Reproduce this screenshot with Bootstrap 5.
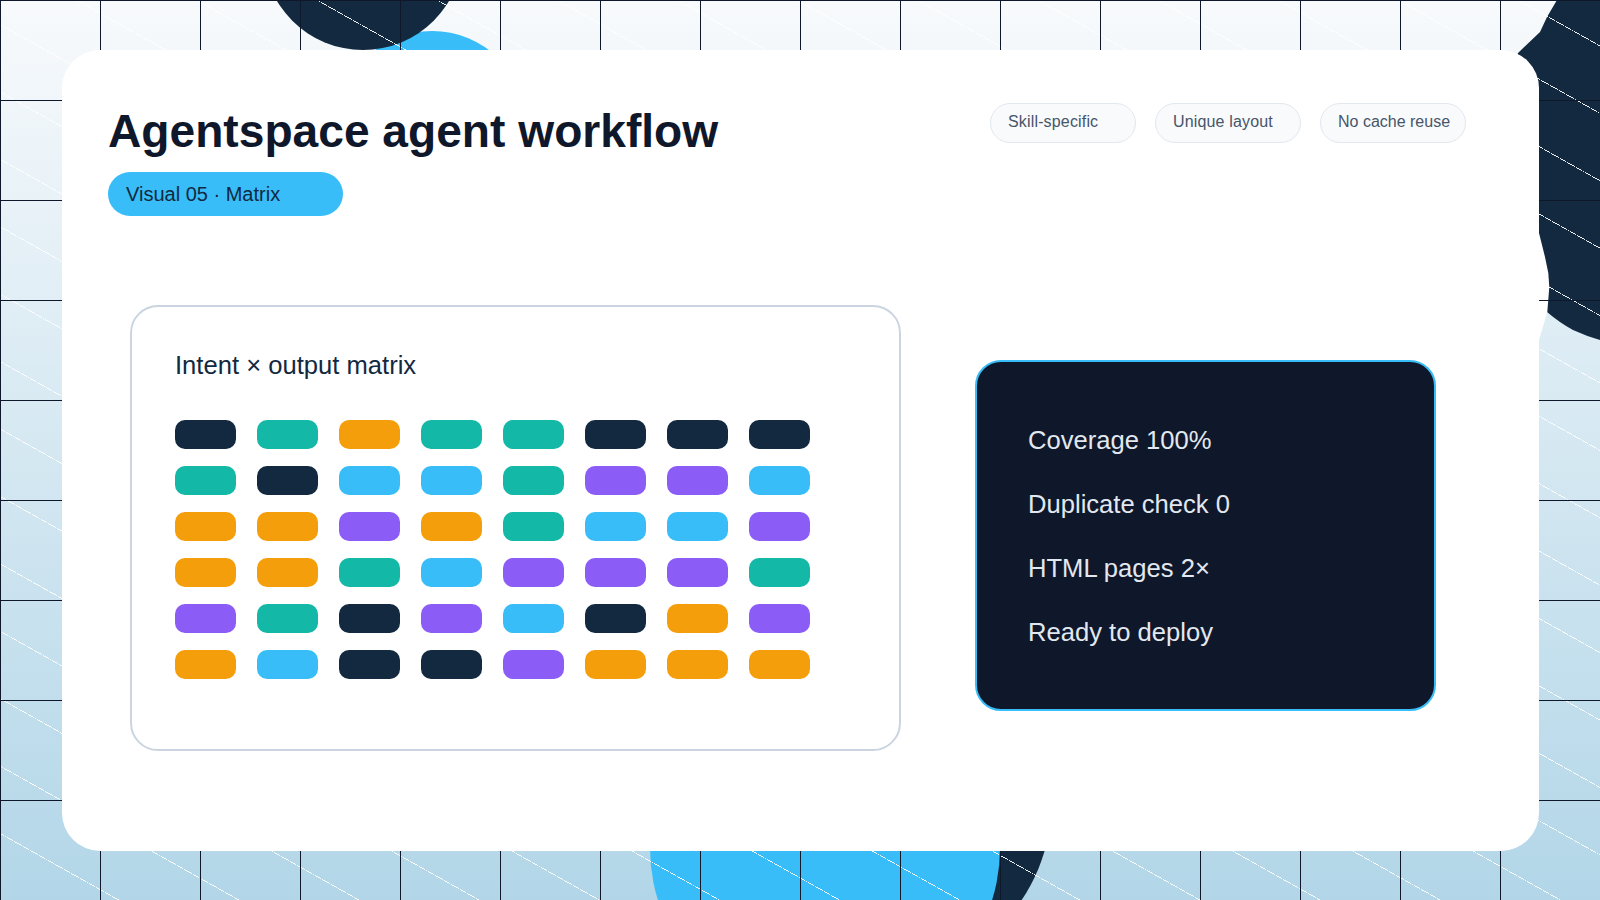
<!DOCTYPE html>
<html lang="en">
<head>
<meta charset="utf-8">
<title>Agentspace agent workflow</title>
<link href="https://cdn.jsdelivr.net/npm/bootstrap@5.3.0/dist/css/bootstrap.min.css" rel="stylesheet">
<style>
html,body{margin:0;height:900px;overflow:hidden}
body{font-family:"Liberation Sans",Arial,sans-serif}
.stage{position:relative;width:1600px;height:900px;overflow:hidden;padding:50px 0 0 62px;background:linear-gradient(180deg,#f8fafc 0%,#b2d6e8 100%)}
.decor{position:absolute;inset:0;width:1600px;height:900px}
.overlay{position:absolute;inset:0;background-image:
 linear-gradient(to right,#0f172a 1px,transparent 1px),
 linear-gradient(to bottom,#0f172a 1px,transparent 1px),
 repeating-linear-gradient(29.3deg,transparent 0,transparent 57.7px,rgba(255,255,255,.92) 57.7px,rgba(255,255,255,.92) 58.45px,transparent 58.45px,transparent 58.79px);
 background-size:100px 100px,100px 100px,auto}
.sheet{position:relative;width:1477px;height:801px;background:#fff;border-radius:38px;padding:54px 73px 0 46px}
.headline{font-size:46.15px;line-height:55px;font-weight:700;color:#0f172a;margin:0 0 13px}
.tagpill{display:block;width:235px;height:44px;line-height:44px;padding-left:18px;font-size:20px;background:#38bdf8;color:#12293f}
.chips{gap:19px;margin-top:-1px}
.chip{width:146px;height:40px;line-height:36px;padding-left:17px;font-size:16px;color:#475569;background:#f8fafc;border:1px solid #e2e8f0}
.chip-wide{letter-spacing:.16px}
.panels{margin:89px 0 0 22px;gap:74px}
.matrixbox{width:771px;height:446px;border:2px solid #cbd5e1;border-radius:28px;padding:40px 43px}
.matrixtitle{font-size:25.6px;line-height:36px;color:#12293f;margin:0 0 37px}
.cells{display:grid;grid-template-columns:repeat(8,61px);grid-auto-rows:29px;column-gap:21px;row-gap:17px}
.cells i{display:block;border-radius:10px}
.n{background:#12293f}.t{background:#14b8a6}.o{background:#f59e0b}.b{background:#38bdf8}.p{background:#8b5cf6}
.statbox{width:461px;height:351px;margin-top:55px;background:#0f172a;border:2px solid #38bdf8;border-radius:26px;padding:46px 51px}
.statbox p{font-size:25.6px;line-height:64px;color:#e2e8f0;margin:0}
</style>
</head>
<body>
<div class="stage">
  <svg class="decor" viewBox="0 0 1600 900" aria-hidden="true">
    <circle cx="432" cy="126" r="95" fill="#38bdf8"/>
    <circle cx="363" cy="-50" r="100" fill="#12293f"/>
    <circle cx="872" cy="800" r="180" fill="#12293f"/>
    <circle cx="825" cy="848" r="175" fill="#38bdf8"/>
    <path d="M1557 0L1547 17L1540 32L1518 53L1500 100L1500 290L1547 312Q1560 323 1573 330Q1586 336 1600 340L1600 0Z" fill="#12293f"/>
    <path d="M1530 233L1539 233L1545 257L1548.3 273L1549.3 287L1547.3 312L1539 340L1530 340Z" fill="#fff"/>
  </svg>
  <div class="overlay"></div>
  <main class="sheet">
    <div class="d-flex justify-content-between align-items-start">
      <div>
        <h1 class="headline">Agentspace agent workflow</h1>
        <span class="tagpill rounded-pill">Visual 05 · Matrix</span>
      </div>
      <div class="d-flex chips">
        <span class="chip chip-wide rounded-pill">Skill-specific</span>
        <span class="chip chip-wide rounded-pill">Unique layout</span>
        <span class="chip rounded-pill">No cache reuse</span>
      </div>
    </div>
    <div class="d-flex align-items-start panels">
      <section class="matrixbox">
        <h2 class="matrixtitle fw-normal">Intent × output matrix</h2>
        <div class="cells">
          <i class="n"></i><i class="t"></i><i class="o"></i><i class="t"></i><i class="t"></i><i class="n"></i><i class="n"></i><i class="n"></i>
          <i class="t"></i><i class="n"></i><i class="b"></i><i class="b"></i><i class="t"></i><i class="p"></i><i class="p"></i><i class="b"></i>
          <i class="o"></i><i class="o"></i><i class="p"></i><i class="o"></i><i class="t"></i><i class="b"></i><i class="b"></i><i class="p"></i>
          <i class="o"></i><i class="o"></i><i class="t"></i><i class="b"></i><i class="p"></i><i class="p"></i><i class="p"></i><i class="t"></i>
          <i class="p"></i><i class="t"></i><i class="n"></i><i class="p"></i><i class="b"></i><i class="n"></i><i class="o"></i><i class="p"></i>
          <i class="o"></i><i class="b"></i><i class="n"></i><i class="n"></i><i class="p"></i><i class="o"></i><i class="o"></i><i class="o"></i>
        </div>
      </section>
      <section class="statbox">
        <p>Coverage 100%</p>
        <p>Duplicate check 0</p>
        <p>HTML pages 2×</p>
        <p>Ready to deploy</p>
      </section>
    </div>
  </main>
</div>
<script src="https://cdn.jsdelivr.net/npm/bootstrap@5.3.0/dist/js/bootstrap.bundle.min.js"></script>
</body>
</html>
